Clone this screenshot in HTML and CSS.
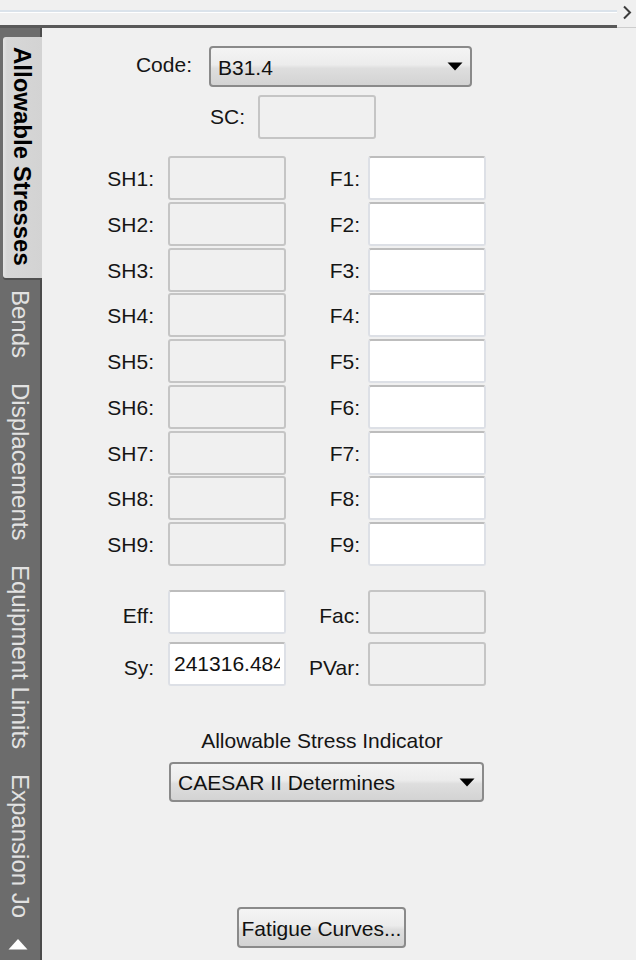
FILE: index.html
```html
<!DOCTYPE html>
<html lang="en">
<head>
<meta charset="utf-8">
<title>Allowable Stresses</title>
<link rel="stylesheet" href="styles.css">
</head>
<body>
<div class="topbar">
  <div class="track"><div class="hairline"></div></div>
  <div class="chev">
    <svg width="10" height="15" viewBox="0 0 10 15"><polyline points="2,1.5 8,7.5 2,13.5" fill="none" stroke="#3c3c3c" stroke-width="2"/></svg>
  </div>
</div>
<div class="main">
  <div class="strip">
    <div class="tab active">Allowable Stresses</div>
    <div class="tab">Bends</div>
    <div class="tab">Displacements</div>
    <div class="tab">Equipment Limits</div>
    <div class="tab">Expansion Jo</div>
    <div class="tabscroll">
      <svg width="20" height="12" viewBox="0 0 20 12"><polygon points="0.5,11.5 10,1 19.5,11.5" fill="#ffffff"/></svg>
    </div>
  </div>
  <div class="content">
    <div class="row-code">
      <div class="lbl lbl-code">Code:</div>
      <div class="combo combo-code">
        <span>B31.4</span>
        <svg width="16" height="9" viewBox="0 0 16 9"><polygon points="0.5,0.5 15.5,0.5 8,8.5" fill="#000"/></svg>
      </div>
    </div>
    <div class="row-sc">
      <div class="lbl lbl-sc">SC:</div>
      <input class="fld gray" type="text" readonly>
    </div>
    <div class="grid grid-sh">
      <div class="lbl lbl-l">SH1:</div><input class="fld gray" type="text" readonly><div class="lbl lbl-r">F1:</div><input class="fld white" type="text">
      <div class="lbl lbl-l">SH2:</div><input class="fld gray" type="text" readonly><div class="lbl lbl-r">F2:</div><input class="fld white" type="text">
      <div class="lbl lbl-l">SH3:</div><input class="fld gray" type="text" readonly><div class="lbl lbl-r">F3:</div><input class="fld white" type="text">
      <div class="lbl lbl-l">SH4:</div><input class="fld gray" type="text" readonly><div class="lbl lbl-r">F4:</div><input class="fld white" type="text">
      <div class="lbl lbl-l">SH5:</div><input class="fld gray" type="text" readonly><div class="lbl lbl-r">F5:</div><input class="fld white" type="text">
      <div class="lbl lbl-l">SH6:</div><input class="fld gray" type="text" readonly><div class="lbl lbl-r">F6:</div><input class="fld white" type="text">
      <div class="lbl lbl-l">SH7:</div><input class="fld gray" type="text" readonly><div class="lbl lbl-r">F7:</div><input class="fld white" type="text">
      <div class="lbl lbl-l">SH8:</div><input class="fld gray" type="text" readonly><div class="lbl lbl-r">F8:</div><input class="fld white" type="text">
      <div class="lbl lbl-l">SH9:</div><input class="fld gray" type="text" readonly><div class="lbl lbl-r">F9:</div><input class="fld white" type="text">
    </div>
    <div class="grid grid-low">
      <div class="lbl lbl-l">Eff:</div><input class="fld white" type="text"><div class="lbl lbl-r">Fac:</div><input class="fld gray" type="text" readonly>
      <div class="lbl lbl-l">Sy:</div><input class="fld white" type="text" value="241316.484"><div class="lbl lbl-r">PVar:</div><input class="fld gray" type="text" readonly>
    </div>
    <div class="indicator">
      <div class="caption">Allowable Stress Indicator</div>
      <div class="combo combo-ind">
        <span>CAESAR II Determines</span>
        <svg width="16" height="9" viewBox="0 0 16 9"><polygon points="0.5,0.5 15.5,0.5 8,8.5" fill="#000"/></svg>
      </div>
    </div>
    <button class="btn" type="button">Fatigue Curves...</button>
  </div>
</div>
</body>
</html>
```
FILE: styles.css
```css
html, body {
  margin: 0;
  padding: 0;
  background: #f0f0f0;
  height: 960px;
  overflow: hidden;
}
body {
  font-family: "Liberation Sans", Arial, sans-serif;
  font-size: 21px;
  color: #151515;
}

/* top bar */
.topbar {
  display: flex;
  height: 28px;
  background: #f0f0f0;
}
.track {
  flex: 1;
  box-sizing: border-box;
  border-bottom: 3px solid #595959;
}
.hairline {
  margin-top: 10px;
  height: 2px;
  background: #dbe3eb;
  border-bottom: 1px solid #ffffff;
}
.chev {
  width: 19px;
  box-sizing: border-box;
  border-bottom: 1px solid #cdcdcd;
  display: flex;
  justify-content: center;
  padding-top: 5px;
}

/* main */
.main {
  display: flex;
  height: 932px;
}
.strip {
  width: 42px;
  flex: none;
  box-sizing: border-box;
  background: #6c6c6c;
  box-shadow: inset -2px 0 0 #4b4b4b;
  display: flex;
  flex-direction: column;
  padding-top: 9px;
  overflow: hidden;
}
.tab {
  writing-mode: vertical-rl;
  font-size: 24px;
  line-height: 40px;
  width: 40px;
  padding: 12px 0 13px;
  color: #e2e2e2;
  white-space: nowrap;
}
.tab.active {
  margin-left: 3px;
  width: 39px;
  line-height: 39px;
  padding: 10px 0 12px;
  color: #000;
  font-weight: bold;
  background: linear-gradient(to right, #e4e4e4 0, #d7d7d7 4px, #d3d3d3 100%);
  border-radius: 3px 0 0 3px;
  box-shadow: 0 2px 0 #505050;
}
.tabscroll {
  margin-top: auto;
  margin-bottom: 10px;
  padding-left: 8px;
  line-height: 0;
}

/* content */
.content {
  flex: 1;
  display: flex;
  flex-direction: column;
  align-items: flex-start;
}
.lbl {
  display: flex;
  align-items: center;
  justify-content: flex-end;
  white-space: nowrap;
}
.row-code {
  display: flex;
  align-items: center;
  margin-top: 18px;
}
.lbl-code {
  width: 150px;
  margin-right: 17px;
  padding-bottom: 3px;
}
.combo {
  box-sizing: border-box;
  display: flex;
  align-items: center;
  justify-content: space-between;
  border: 2px solid #8a8a8a;
  border-radius: 4px;
  padding: 0 7px;
  background: linear-gradient(to bottom, #f4f4f4 0%, #ececec 45%, #dedede 55%, #d3d3d3 100%);
  color: #111;
}
.combo-code {
  width: 263px;
  height: 41px;
  padding-top: 2px;
}
.combo-code svg, .combo-ind svg {
  margin-top: -2px;
}
.row-sc {
  display: flex;
  align-items: center;
  margin-top: 8px;
}
.lbl-sc {
  width: 203px;
  margin-right: 13px;
}
.fld {
  box-sizing: border-box;
  width: 118px;
  height: 44px;
  margin: 0;
  padding: 0 4px;
  border-radius: 3px;
  font: inherit;
  color: #111;
  outline: none;
  -webkit-appearance: none;
  appearance: none;
}
.fld.gray {
  background: #f0f0f0;
  border: 2px solid #c5c5c5;
}
.fld.white {
  background: #ffffff;
  border: 2px solid #dde0e6;
  border-top-color: #bdbdbd;
}
.grid {
  display: grid;
  grid-template-columns: 126px 118px 82px 118px;
  grid-auto-rows: 44px;
}
.grid-sh {
  margin-top: 17px;
  row-gap: 1.75px;
}
.grid-sh .lbl {
  padding-top: 2px;
}
.grid-low {
  margin-top: 24px;
  row-gap: 8px;
}
.grid-low .lbl {
  padding-top: 8px;
}
.lbl-l {
  padding-right: 14px;
}
.lbl-r {
  padding-right: 8px;
}
.indicator {
  margin-top: 43px;
  margin-left: 127px;
  width: 315px;
  display: flex;
  flex-direction: column;
}
.caption {
  line-height: 24px;
  text-align: center;
  padding-right: 9px;
}
.combo-ind {
  margin-top: 9px;
  height: 40px;
  padding-top: 2px;
}
.btn {
  margin-top: 105px;
  margin-left: 195px;
  box-sizing: border-box;
  width: 169px;
  height: 41px;
  padding: 2px 0 0;
  font: inherit;
  color: #111;
  border: 2px solid #8a8a8a;
  border-radius: 4px;
  background: linear-gradient(to bottom, #f4f4f4 0%, #ececec 45%, #dedede 55%, #d3d3d3 100%);
  white-space: nowrap;
}
```
